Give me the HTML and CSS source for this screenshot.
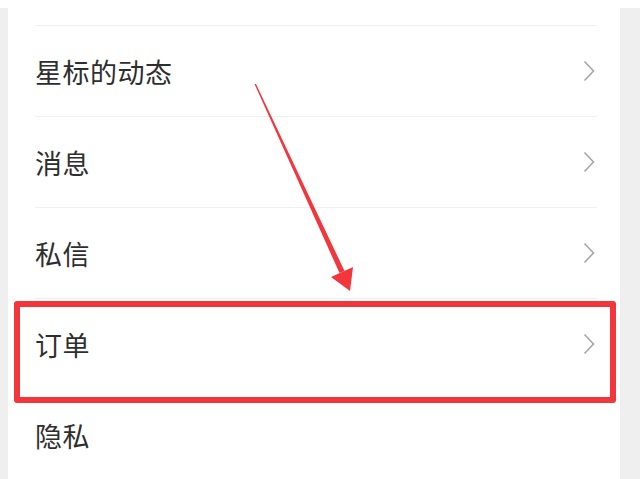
FILE: index.html
```html
<!DOCTYPE html>
<html lang="zh">
<head>
<meta charset="utf-8">
<link rel="stylesheet" href="styles.css">
</head>
<body>
<div class="screen">
  <div class="edge edge-left"></div>
  <div class="card">
    <div class="spacer"></div>
    <div class="row"><span class="label">星标的动态</span><svg class="chev" viewBox="0 0 12 22"><path d="M1.5 1.5 L10.5 11 L1.5 20.5" /></svg></div>
    <div class="row"><span class="label">消息</span><svg class="chev" viewBox="0 0 12 22"><path d="M1.5 1.5 L10.5 11 L1.5 20.5" /></svg></div>
    <div class="row"><span class="label">私信</span><svg class="chev" viewBox="0 0 12 22"><path d="M1.5 1.5 L10.5 11 L1.5 20.5" /></svg></div>
    <div class="row"><span class="label">订单</span><svg class="chev" viewBox="0 0 12 22"><path d="M1.5 1.5 L10.5 11 L1.5 20.5" /></svg></div>
    <div class="row row-plain"><span class="label">隐私</span></div>
  </div>
  <div class="edge edge-right"></div>
  <div class="highlight"></div>
  <svg class="arrow" viewBox="0 0 640 479">
    <polygon points="254.5,84 256,84 344.5,271 339.5,273" />
    <polygon points="331,277 353,267 350,291" />
  </svg>
</div>
</body>
</html>
```
FILE: styles.css
```css
html, body {
  margin: 0;
  padding: 0;
  background: #ffffff;
}
.screen {
  position: relative;
  width: 640px;
  height: 479px;
  overflow: hidden;
  display: flex;
  font-family: "Noto Sans CJK SC", "Noto Sans", sans-serif;
}
.edge {
  margin-top: 8px;
  background: #efefef;
}
.edge-left {
  width: 8px;
}
.edge-right {
  width: 20px;
}
.card {
  flex: 1;
  background: #ffffff;
  padding: 0 23px 0 27px;
  display: flex;
  flex-direction: column;
}
.spacer {
  height: 25px;
  flex: none;
}
.row {
  height: 91px;
  flex: none;
  border-top: 1px solid #f0f0f0;
  display: flex;
  align-items: center;
  justify-content: space-between;
  box-sizing: border-box;
}
.row-plain {
  border-top-color: transparent;
}
.label {
  font-size: 27px;
  color: #2e2e2e;
  line-height: 1;
  letter-spacing: 0.5px;
}
.chev {
  width: 12px;
  height: 22px;
  margin-right: 2px;
}
.chev path {
  fill: none;
  stroke: #a6a6a6;
  stroke-width: 1.6;
}
.highlight {
  position: absolute;
  left: 14px;
  top: 301px;
  width: 602px;
  height: 102px;
  box-sizing: border-box;
  border: 6px solid #f2363c;
  border-radius: 3px;
}
.arrow {
  position: absolute;
  left: 0;
  top: 0;
  width: 640px;
  height: 479px;
}
.arrow polygon {
  fill: #f2363c;
}
```
